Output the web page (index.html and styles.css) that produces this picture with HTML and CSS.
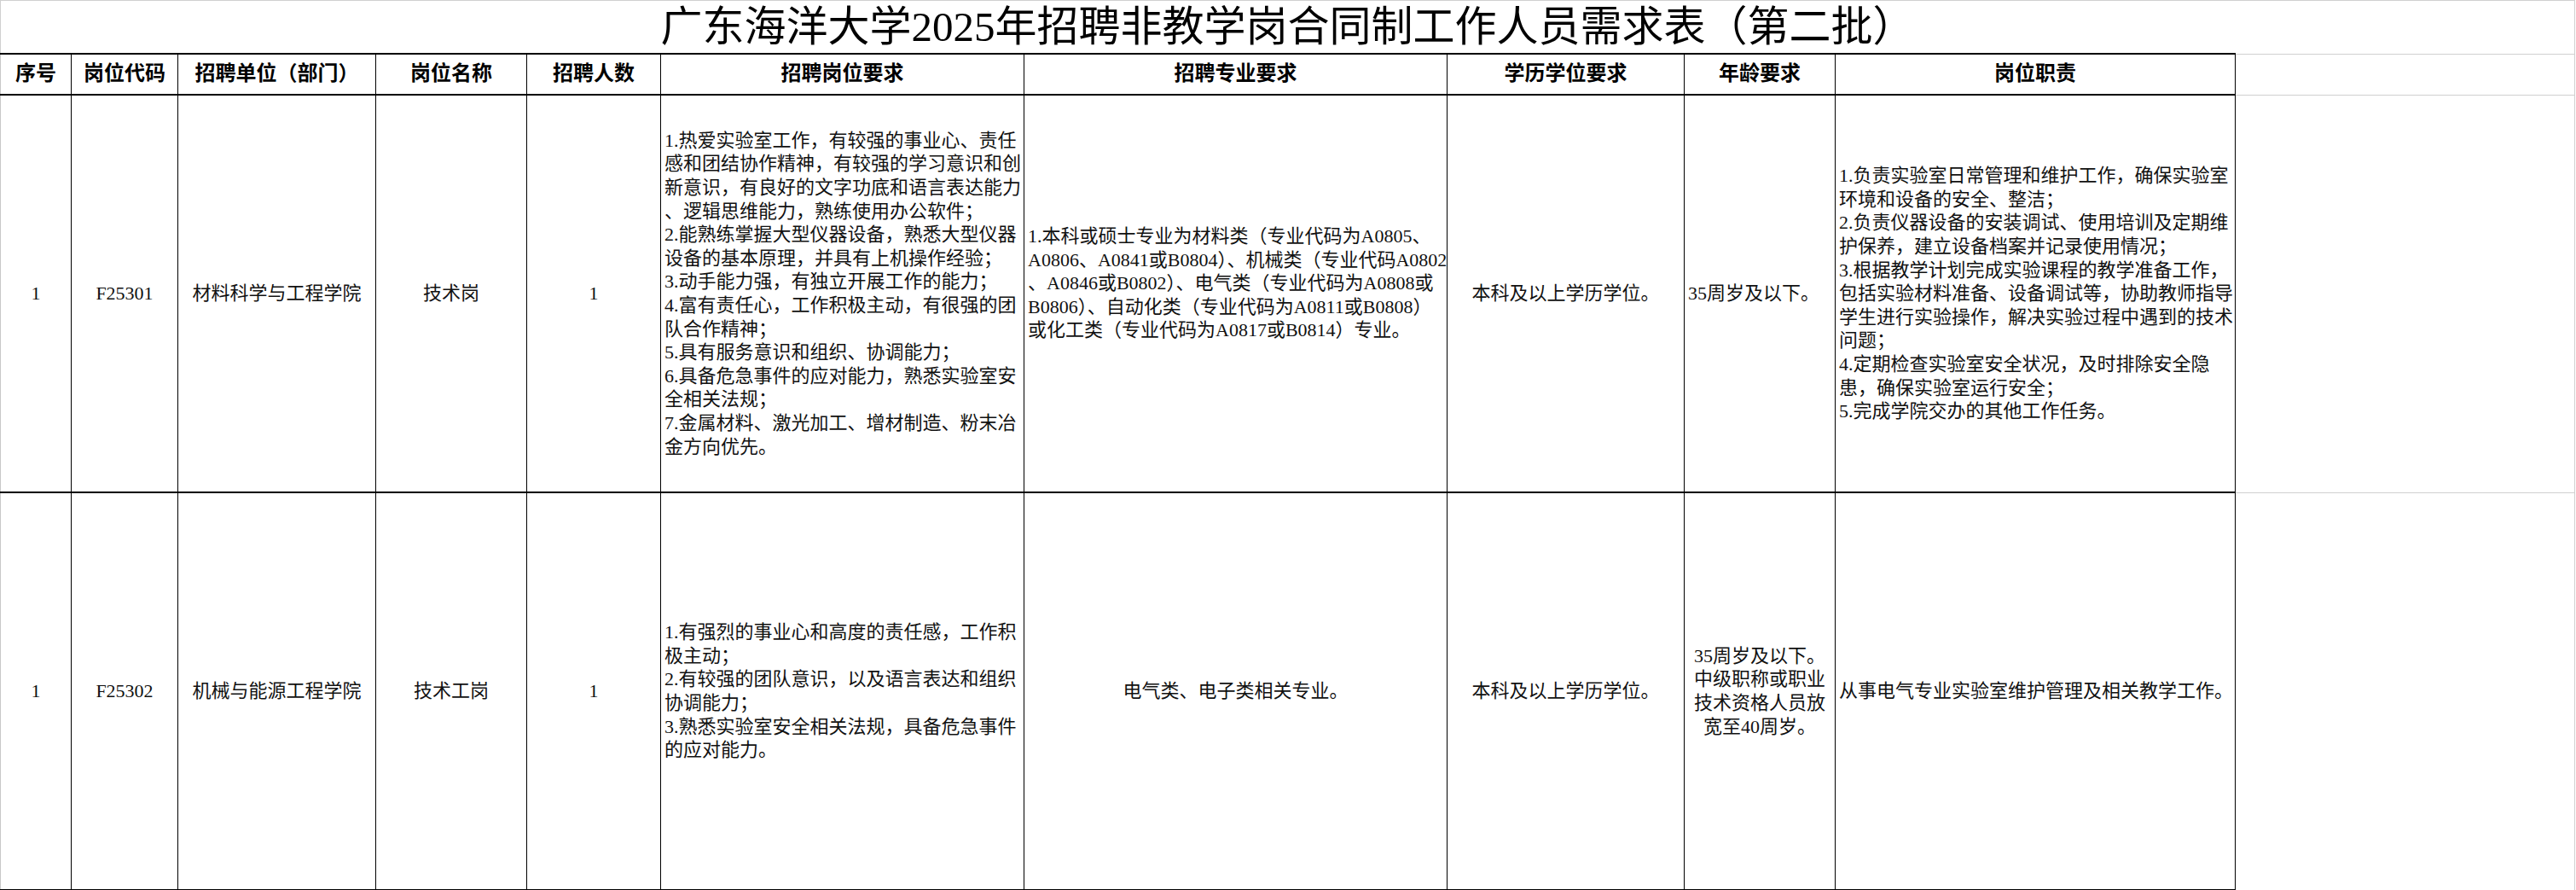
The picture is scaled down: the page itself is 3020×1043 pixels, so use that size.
FILE: index.html
```html
<!DOCTYPE html>
<html lang="zh-CN">
<head>
<meta charset="utf-8">
<title>广东海洋大学2025年招聘非教学岗合同制工作人员需求表（第二批）</title>
<link rel="stylesheet" href="styles.css">
</head>
<body>
<table class="sheet">
  <colgroup>
    <col class="w-seq">
    <col class="w-code">
    <col class="w-unit">
    <col class="w-name">
    <col class="w-num">
    <col class="w-req">
    <col class="w-major">
    <col class="w-edu">
    <col class="w-age">
    <col class="w-duty">
    <col class="w-fill">
  </colgroup>
  <tr>
    <td class="title" colspan="11">广东海洋大学2025年招聘非教学岗合同制工作人员需求表（第二批）</td>
  </tr>
  <tr class="head">
    <th class="first">序号</th>
    <th>岗位代码</th>
    <th>招聘单位（部门）</th>
    <th>岗位名称</th>
    <th>招聘人数</th>
    <th>招聘岗位要求</th>
    <th>招聘专业要求</th>
    <th>学历学位要求</th>
    <th>年龄要求</th>
    <th>岗位职责</th>
    <td class="filler"></td>
  </tr>
  <tr class="row">
    <td class="first">1</td>
    <td>F25301</td>
    <td>材料科学与工程学院</td>
    <td>技术岗</td>
    <td>1</td>
    <td class="left">1.热爱实验室工作，有较强的事业心、责任<br>感和团结协作精神，有较强的学习意识和创<br>新意识，有良好的文字功底和语言表达能力<br>、逻辑思维能力，熟练使用办公软件；<br>2.能熟练掌握大型仪器设备，熟悉大型仪器<br>设备的基本原理，并具有上机操作经验；<br>3.动手能力强，有独立开展工作的能力；<br>4.富有责任心，工作积极主动，有很强的团<br>队合作精神；<br>5.具有服务意识和组织、协调能力；<br>6.具备危急事件的应对能力，熟悉实验室安<br>全相关法规；<br>7.金属材料、激光加工、增材制造、粉末冶<br>金方向优先。</td>
    <td class="left"><div class="lift">1.本科或硕士专业为材料类（专业代码为A0805、<br>A0806、A0841或B0804）、机械类（专业代码A0802<br>、A0846或B0802）、电气类（专业代码为A0808或<br>B0806）、自动化类（专业代码为A0811或B0808）<br>或化工类（专业代码为A0817或B0814）专业。</div></td>
    <td>本科及以上学历学位。</td>
    <td class="left">35周岁及以下。</td>
    <td class="left">1.负责实验室日常管理和维护工作，确保实验室<br>环境和设备的安全、整洁；<br>2.负责仪器设备的安装调试、使用培训及定期维<br>护保养，建立设备档案并记录使用情况；<br>3.根据教学计划完成实验课程的教学准备工作，<br>包括实验材料准备、设备调试等，协助教师指导<br>学生进行实验操作，解决实验过程中遇到的技术<br>问题；<br>4.定期检查实验室安全状况，及时排除安全隐<br>患，确保实验室运行安全；<br>5.完成学院交办的其他工作任务。</td>
    <td class="filler"></td>
  </tr>
  <tr class="row">
    <td class="first">1</td>
    <td>F25302</td>
    <td>机械与能源工程学院</td>
    <td>技术工岗</td>
    <td>1</td>
    <td class="left">1.有强烈的事业心和高度的责任感，工作积<br>极主动；<br>2.有较强的团队意识，以及语言表达和组织<br>协调能力；<br>3.熟悉实验室安全相关法规，具备危急事件<br>的应对能力。</td>
    <td>电气类、电子类相关专业。</td>
    <td>本科及以上学历学位。</td>
    <td>35周岁及以下。<br>中级职称或职业<br>技术资格人员放<br>宽至40周岁。</td>
    <td>从事电气专业实验室维护管理及相关教学工作。</td>
    <td class="filler"></td>
  </tr>
</table>
</body>
</html>
```

FILE: styles.css
```css
html, body {
  margin: 0;
  padding: 0;
  background: #ffffff;
}

body {
  width: 3020px;
  height: 1043px;
  overflow: hidden;
  font-family: "Liberation Serif", "Noto Sans CJK SC", serif;
  color: #111111;
}

.sheet {
  border-collapse: collapse;
  table-layout: fixed;
  width: 3018px;
}

.w-seq { width: 83px; }
.w-code { width: 125px; }
.w-unit { width: 232px; }
.w-name { width: 177px; }
.w-num { width: 157px; }
.w-req { width: 426px; }
.w-major { width: 496px; }
.w-edu { width: 278px; }
.w-age { width: 177px; }
.w-duty { width: 469px; }
.w-fill { width: 398px; }

.sheet td,
.sheet th {
  padding: 0 4px;
  border-left: 1px solid #000000;
  border-right: 1px solid #000000;
  border-top: 2px solid #000000;
  border-bottom: 2px solid #000000;
  font-size: 22px;
  line-height: 27.6px;
  font-weight: 400;
  text-align: center;
  vertical-align: middle;
  white-space: nowrap;
  overflow: hidden;
}

.sheet .title {
  border-top: 1px solid #d0d0d0;
  border-left: 1px solid #d0d0d0;
  border-right: 1px solid #d0d0d0;
  border-bottom: none;
  height: 61px;
  padding: 0;
  font-size: 49px;
  line-height: 58px;
  color: #000000;
}

.sheet th {
  height: 46px;
  font-size: 24px;
  font-weight: 700;
  color: #000000;
}

.row td {
  height: 464px;
}

.sheet .first {
  border-left: 1px solid #c8c8c8;
}

.sheet .left {
  text-align: left;
}

.lift {
  padding-bottom: 24px;
}

.sheet .filler {
  border-top: 1px solid #d0d0d0;
  border-bottom: 1px solid #d0d0d0;
  border-right: 1px solid #d0d0d0;
}
```
